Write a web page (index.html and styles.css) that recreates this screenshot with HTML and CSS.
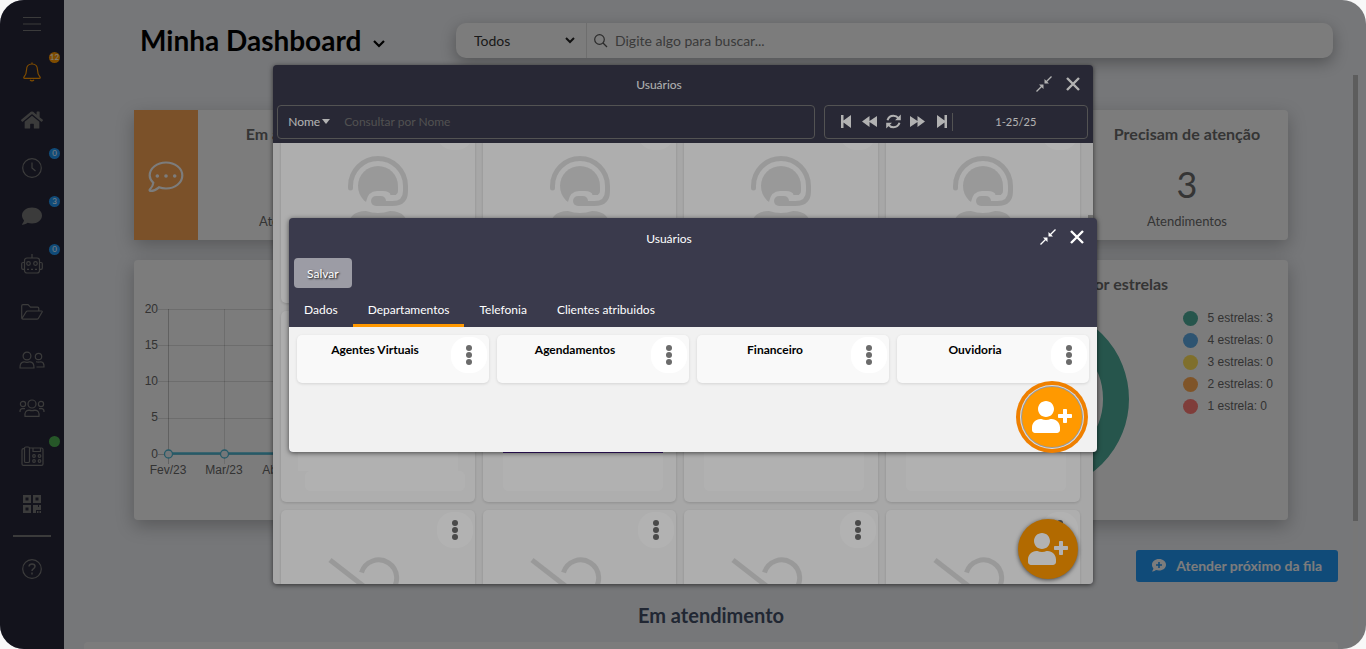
FILE: index.html
```html
<!DOCTYPE html>
<html lang="pt-BR">
<head>
<meta charset="utf-8">
<title>Minha Dashboard</title>
<link rel="stylesheet" href="styles.css">
</head>
<body>
<svg class="defs" width="0" height="0" aria-hidden="true">
  <symbol id="i-dots" viewBox="0 0 8 22"><circle cx="4" cy="4" r="3"/><circle cx="4" cy="11" r="3"/><circle cx="4" cy="18" r="3"/></symbol>
  <symbol id="i-close" viewBox="0 0 16 16"><path d="M2 2l12 12M14 2L2 14" fill="none" stroke="currentColor" stroke-width="2.4"/></symbol>
  <symbol id="i-shrink" viewBox="0 0 16 16"><path d="M.5 15.500L6 10M15.500.5L10 6" fill="none" stroke="currentColor" stroke-width="1.4"/><path d="M3 8.500h4.500V13zM8.500 3v4.500H13z"/></symbol>
  <symbol id="i-useradd" viewBox="0 0 640 512"><path d="M624 208h-64v-64c0-8.800-7.200-16-16-16h-32c-8.800 0-16 7.200-16 16v64h-64c-8.800 0-16 7.200-16 16v32c0 8.800 7.200 16 16 16h64v64c0 8.800 7.200 16 16 16h32c8.800 0 16-7.200 16-16v-64h64c8.800 0 16-7.200 16-16v-32c0-8.800-7.200-16-16-16zm-400 48c70.700 0 128-57.300 128-128S294.700 0 224 0 96 57.300 96 128s57.300 128 128 128zm89.600 32h-16.700c-22.200 10.200-46.900 16-72.900 16s-50.600-5.800-72.900-16h-16.700C60.200 288 0 348.200 0 422.400V464c0 26.500 21.500 48 48 48h352c26.500 0 48-21.500 48-48v-41.600c0-74.200-60.200-134.400-134.400-134.400z"/></symbol>
  <symbol id="i-agent" viewBox="0 0 60 80">
    <circle cx="30" cy="30" r="20"/>
    <path d="M18 50V46q2-11 11-11h6q6 0 8 4h8v11z" fill="#f9f9f9"/>
    <path d="M50 30v5q0 4-5 4h-3z"/>
    <path d="M2.500 32V30a27.500 27.500 0 0 1 55 0v5q0 12.500-13 12.500H30" fill="none" stroke="currentColor" stroke-width="5" stroke-linecap="round"/>
    <rect x="23" y="40" width="15" height="10" rx="5"/>
    <path d="M0 80v-7q0-18 18-18 12 4 24 0 18 0 18 18v7z"/>
  </symbol>
  <symbol id="i-noagent" viewBox="0 0 100 80"><g fill="none" stroke="currentColor" stroke-width="5"><path d="M2 6l76 59" stroke-linecap="butt"/><path d="M33.500 18.500a18 18 0 1 1 29 19"/></g></symbol>
</svg>

<div class="app">
  <nav class="side" aria-label="Menu">
    <a class="item" href="#" aria-label="Abrir menu"><svg width="18" height="16" viewBox="0 0 18 16"><path d="M0 1.500h18M0 8h18M0 14.500h18"/></svg></a>
    <a class="item alert" href="#" aria-label="Notificações"><svg width="18" height="20" viewBox="0 0 18 20"><path d="M9 .5v1.500M9 2C5.500 2 3.500 4.500 3.500 8c0 4-1.200 5.500-2.500 7-.5.7-.2 1.300.6 1.300h14.800c.8 0 1.100-.6.6-1.300-1.300-1.500-2.500-3-2.500-7C14.500 4.500 12.500 2 9 2zM7 18q2 1.800 4 0"/></svg><span class="badge orange">12</span></a>
    <a class="item" href="#" aria-label="Início"><svg class="solid" width="22" height="20" viewBox="0 0 576 512"><path d="M280.370 148.260L96 300.110V464a16 16 0 0 0 16 16l112.060-.29a16 16 0 0 0 15.920-16V368a16 16 0 0 1 16-16h64a16 16 0 0 1 16 16v95.640a16 16 0 0 0 16 16.050L464 480a16 16 0 0 0 16-16V300L295.670 148.260a12.190 12.190 0 0 0-15.300 0zM571.600 251.470L488 182.560V44.050a12 12 0 0 0-12-12h-56a12 12 0 0 0-12 12v72.610L318.470 43a48 48 0 0 0-61 0L4.340 251.470a12 12 0 0 0-1.600 16.900l25.500 31A12 12 0 0 0 45.150 301l235.220-193.740a12.190 12.190 0 0 1 15.300 0L530.900 301a12 12 0 0 0 16.900-1.600l25.500-31a12 12 0 0 0-1.700-16.930z"/></svg></a>
    <a class="item" href="#" aria-label="Em espera"><svg width="20" height="20" viewBox="0 0 20 20"><circle cx="10" cy="10" r="9.300"/><path d="M10 4.500V10l3.500 3"/></svg><span class="badge">0</span></a>
    <a class="item" href="#" aria-label="Conversas"><svg class="solid" width="20" height="18" viewBox="0 0 20 18"><path d="M10 .5c5.500 0 10 3.500 10 8s-4.500 8-10 8c-1.600 0-3-.3-4.400-.8C4.300 16.700 2.300 17.800.3 17.700c-.3 0-.4-.4-.2-.7C1 16 1.900 14.600 2 13.200.8 11.900 0 10.300 0 8.500c0-4.500 4.500-8 10-8z"/></svg><span class="badge">3</span></a>
    <a class="item" href="#" aria-label="Robôs"><svg width="22" height="20" viewBox="0 0 22 20"><path d="M11 0v4"/><rect x="3.500" y="4" width="15" height="15" rx="2.500"/><path d="M3.500 8.500H2q-1.300 0-1.300 1.300V14q0 1.300 1.300 1.300h1.500M18.500 8.500H20q1.300 0 1.300 1.300V14q0 1.300-1.300 1.300h-1.500"/><circle cx="7.500" cy="9.500" r="1.800"/><circle cx="14.500" cy="9.500" r="1.800"/><path d="M6 15.300h2M10 15.300h2M14 15.300h2"/></svg><span class="badge">0</span></a>
    <a class="item" href="#" aria-label="Arquivos"><svg width="22" height="16" viewBox="0 0 22 16"><path d="M.7 14V2Q.7.7 2 .7h5l2.500 2.500h7q1.300 0 1.300 1.300V7M1 14.500L5 8q.6-1 1.700-1h13.800q1 0 .6 1l-3.500 6q-.6 1.200-1.800 1.200H2Q.7 15.200.7 14"/></svg></a>
    <a class="item" href="#" aria-label="Contatos"><svg width="26" height="18" viewBox="0 0 26 18"><circle cx="8" cy="5" r="3.900"/><path d="M1 17q-.2-6 4-6.200 3 1 6 0 4.200.2 4 6.200z"/><circle cx="19.500" cy="5.500" r="3.200"/><path d="M17 10.800q2.500.8 5 0 3.200.2 3 5.200h-7.500"/></svg></a>
    <a class="item" href="#" aria-label="Equipes"><svg width="26" height="18" viewBox="0 0 26 18"><circle cx="13" cy="5" r="4"/><path d="M6 17.300q-.6-6 4-6.200 3 1 6 0 4.600.2 4 6.200z"/><circle cx="4" cy="5" r="2.600"/><circle cx="22" cy="5" r="2.600"/><path d="M1 13q-.2-3 2-3.300h3M25 13q.2-3-2-3.300h-3"/></svg></a>
    <a class="item" href="#" aria-label="Telefonia"><svg width="23" height="20" viewBox="0 0 23 20"><path d="M8.500 2H20.500q1.500 0 1.500 1.500V18q0 1.300-1.500 1.300H2.500Q1 19.300 1 18V4q0-1.300 1.500-1.300h1"/><rect x="3.500" y="1" width="5" height="15.500" rx="1.300"/><path d="M12 2v3.500h7.500V2"/><g><circle cx="13" cy="10" r="1.300"/><circle cx="18.500" cy="10" r="1.300"/><circle cx="13" cy="15" r="1.300"/><circle cx="18.500" cy="15" r="1.300"/></g></svg><span class="badge green"></span></a>
    <a class="item" href="#" aria-label="QR Code"><svg class="solid" width="18" height="18" viewBox="0 0 18 18"><path fill-rule="evenodd" d="M0 0h8v8H0zM2.500 2.500v3h3v-3zM10 0h8v8h-8zM12.500 2.500v3h3v-3zM0 10h8v8H0zM2.500 12.500v3h3v-3zM10 10h5v2h1v-2h2v5h-5v3h-3zM14 16h1.500v2H14zM16.500 16H18v2h-1.500z"/></svg></a>
    <hr class="rule">
    <a class="item" href="#" aria-label="Ajuda"><svg width="20" height="20" viewBox="0 0 20 20"><circle cx="10" cy="10" r="9.300"/><path d="M7 7.500q.3-2.500 3-2.500 3 0 3 2.300 0 1.600-1.700 2.500Q10 10.500 10 12M10 13.500v2" stroke-width="1.500"/></svg></a>
  </nav>

  <main class="main">
    <header class="top">
      <h1 class="title">Minha Dashboard <svg width="12" height="8" viewBox="0 0 12 8"><path d="M1 1l5 5 5-5" fill="none" stroke="#000" stroke-width="2.200"/></svg></h1>
      <form class="search">
        <label class="scope"><select aria-label="Filtro"><option>Todos</option></select><svg width="10" height="7" viewBox="0 0 10 7"><path d="M1 1l4 4 4-4" fill="none" stroke="#222" stroke-width="2"/></svg></label>
        <svg width="14" height="14" viewBox="0 0 14 14"><g fill="none" stroke="#555" stroke-width="1.200"><circle cx="5.500" cy="5.500" r="4.800"/><path d="M9 9l4 4"/></g></svg>
        <input type="text" aria-label="Buscar" placeholder="Digite algo para buscar...">
      </form>
    </header>

    <div class="content">
      <section class="stats">
        <article class="card stat">
          <div class="swatch"><svg width="36" height="32" viewBox="0 0 36 32"><path d="M18 1.500c9 0 16.300 5.700 16.300 13S27 27.500 18 27.500c-2.500 0-5-.4-7-1.200-2.500 2.200-5.300 3.700-8.500 3.700-1 0-1.200-.8-.6-1.500 1.800-2 3.300-4 3.400-6.700C3 19.500 1.700 17 1.700 14.500c0-7.300 7.300-13 16.300-13z" fill="none" stroke="#f9f9f9" stroke-width="2.200"/><g fill="#f9f9f9"><circle cx="9.300" cy="15" r="1.800"/><circle cx="18" cy="15" r="1.800"/><circle cx="26.700" cy="15" r="1.800"/></g></svg></div>
          <div class="info"><h3>Em andamento</h3><p>Atendimentos</p></div>
        </article>
        <article class="card stat"></article>
        <article class="card stat"></article>
        <article class="card stat">
          <div class="swatch"></div>
          <div class="info"><h3>Precisam de atenção</h3><strong>3</strong><p>Atendimentos</p></div>
        </article>
      </section>
      <section class="charts">
        <article class="card chart">
          <svg width="300" height="220" viewBox="0 0 300 220">
            <g stroke="#000" stroke-opacity=".12"><path d="M24 9.500h276M24 45.500h276M24 81.500h276M24 118.500h276M90.500 9v155M146.500 9v155" /></g>
            <path d="M34.500 9v155M24 154.500h276" stroke="#000" stroke-opacity=".22"/>
            <path d="M34 153.500h266" stroke="#4bb4d0" stroke-width="2.500"/>
            <g fill="#e8eff2" stroke="#4bb4d0" stroke-width="1.300"><circle cx="34.500" cy="154" r="4"/><circle cx="90.500" cy="154" r="4"/><circle cx="146.500" cy="154" r="4"/></g>
            <g class="axis" text-anchor="end"><text x="24" y="13">20</text><text x="24" y="49">15</text><text x="24" y="85">10</text><text x="24" y="121">5</text><text x="24" y="158">0</text></g>
            <g class="axis" text-anchor="middle"><text x="34" y="174">Fev/23</text><text x="90" y="174">Mar/23</text><text x="146" y="174">Abr/23</text></g>
          </svg>
        </article>
        <article class="card rating">
          <h3>Notas por estrelas</h3>
          <div class="ratingrow">
            <svg width="184" height="184" viewBox="0 0 184 184"><circle cx="92" cy="92" r="79" fill="none" stroke="#4caa98" stroke-width="26"/></svg>
            <ul class="legend">
              <li><i class="dot teal"></i>5 estrelas: 3</li>
              <li><i class="dot blue"></i>4 estrelas: 0</li>
              <li><i class="dot yellow"></i>3 estrelas: 0</li>
              <li><i class="dot amber"></i>2 estrelas: 0</li>
              <li><i class="dot red"></i>1 estrela: 0</li>
            </ul>
          </div>
        </article>
      </section>
      <div class="actions"><button class="next" type="button"><svg width="14" height="13" viewBox="0 0 14 13"><path d="M7 0c4 0 7 2.500 7 5.800s-3 5.800-7 5.800c-1 0-2-.2-3-.5C3 12 1.700 12.600.3 12.500c-.3 0-.3-.3-.1-.5.6-.7 1.100-1.600 1.200-2.600C.5 8.400 0 7.200 0 5.800 0 2.500 3 0 7 0z" fill="#f9f9f9"/><path d="M7 3v6M4 6h6" stroke="#2196f3" stroke-width="1.600"/></svg>Atender próximo da fila</button></div>
      <h2 class="heading">Em atendimento</h2>
      <section class="card list"></section>
    </div>
    <div class="track"><div class="thumb"></div></div>
  </main>

  <div class="backdrop"></div>

  <section class="window users" role="dialog" aria-label="Usuários">
    <header class="bar">
      <h2>Usuários</h2>
      <button type="button" aria-label="Reduzir"><svg width="16" height="16"><use href="#i-shrink"/></svg></button>
      <button type="button" aria-label="Fechar"><svg width="16" height="16"><use href="#i-close"/></svg></button>
    </header>
    <div class="tools">
      <div class="field query">
        <label class="by"><select aria-label="Campo"><option>Nome</option></select><svg width="8" height="5" viewBox="0 0 8 5"><path d="M0 0h8L4 5z"/></svg></label>
        <input type="text" aria-label="Consultar por Nome" placeholder="Consultar por Nome">
      </div>
      <div class="field pager">
        <button type="button" aria-label="Primeira"><svg width="10" height="13" viewBox="0 0 10 13"><path d="M0 0h2.500v5.500L10 0v13L2.500 7.500V13H0z"/></svg></button>
        <button type="button" aria-label="Anterior"><svg width="15" height="11" viewBox="0 0 15 11"><path d="M7.500 0v5L15 0v11L7.500 6v5L0 5.500z"/></svg></button>
        <button type="button" aria-label="Atualizar"><svg width="15" height="15" viewBox="0 0 15 15"><g fill="none" stroke="currentColor" stroke-width="2"><path d="M1.500 6.200Q2.800 1.800 7.500 1.700q3 0 5 2.500M13.500 8.800q-1.300 4.400-6 4.500-3 0-5-2.500"/></g><path d="M14.800.5v5.800H9zM.2 14.500V8.700H6z"/></svg></button>
        <button type="button" aria-label="Próxima"><svg width="15" height="11" viewBox="0 0 15 11"><path d="M7.500 0v5L0 0v11l7.500-5v5L15 5.500z"/></svg></button>
        <button type="button" aria-label="Última"><svg width="10" height="13" viewBox="0 0 10 13"><path d="M10 0H7.500v5.500L0 0v13l7.500-5.500V13H10z"/></svg></button>
        <span class="count">1-25/25</span>
      </div>
    </div>
    <div class="people">
      <div class="grid">
        <article class="person"><svg width="60" height="80"><use href="#i-agent"/></svg><button class="more" type="button" aria-label="Opções"><svg width="8" height="22"><use href="#i-dots"/></svg></button></article>
        <article class="person"><svg width="60" height="80"><use href="#i-agent"/></svg><button class="more" type="button" aria-label="Opções"><svg width="8" height="22"><use href="#i-dots"/></svg></button></article>
        <article class="person"><svg width="60" height="80"><use href="#i-agent"/></svg><button class="more" type="button" aria-label="Opções"><svg width="8" height="22"><use href="#i-dots"/></svg></button></article>
        <article class="person"><svg width="60" height="80"><use href="#i-agent"/></svg><button class="more" type="button" aria-label="Opções"><svg width="8" height="22"><use href="#i-dots"/></svg></button></article>
        <article class="person low"><div class="plate wide"></div><div class="plate short"></div></article>
        <article class="person low"><div class="plate lined"></div></article>
        <article class="person low"><div class="plate"></div></article>
        <article class="person low"><div class="plate"></div></article>
        <article class="person"><svg width="100" height="80"><use href="#i-noagent"/></svg><button class="more" type="button" aria-label="Opções"><svg width="8" height="22"><use href="#i-dots"/></svg></button></article>
        <article class="person"><svg width="100" height="80"><use href="#i-noagent"/></svg><button class="more" type="button" aria-label="Opções"><svg width="8" height="22"><use href="#i-dots"/></svg></button></article>
        <article class="person"><svg width="100" height="80"><use href="#i-noagent"/></svg><button class="more" type="button" aria-label="Opções"><svg width="8" height="22"><use href="#i-dots"/></svg></button></article>
        <article class="person"><svg width="100" height="80"><use href="#i-noagent"/></svg><button class="more" type="button" aria-label="Opções"><svg width="8" height="22"><use href="#i-dots"/></svg></button></article>
      </div>
      <div class="scroll"></div>
    </div>
    <button class="fab" type="button" aria-label="Adicionar usuário"><svg width="40" height="32"><use href="#i-useradd"/></svg></button>
    <div class="shade"></div>
  </section>

  <section class="window user" role="dialog" aria-label="Usuário">
    <header class="bar">
      <h2>Usuários</h2>
      <button type="button" aria-label="Reduzir"><svg width="16" height="16"><use href="#i-shrink"/></svg></button>
      <button type="button" aria-label="Fechar"><svg width="16" height="16"><use href="#i-close"/></svg></button>
    </header>
    <div class="save"><button type="button">Salvar</button></div>
    <nav class="tabs">
      <a href="#">Dados</a><a class="on" href="#">Departamentos</a><a href="#">Telefonia</a><a href="#">Clientes atribuidos</a>
    </nav>
    <div class="depts">
      <article class="dept"><h3>Agentes Virtuais</h3><button class="more" type="button" aria-label="Opções"><svg width="8" height="22"><use href="#i-dots"/></svg></button></article>
      <article class="dept"><h3>Agendamentos</h3><button class="more" type="button" aria-label="Opções"><svg width="8" height="22"><use href="#i-dots"/></svg></button></article>
      <article class="dept"><h3>Financeiro</h3><button class="more" type="button" aria-label="Opções"><svg width="8" height="22"><use href="#i-dots"/></svg></button></article>
      <article class="dept"><h3>Ouvidoria</h3><button class="more" type="button" aria-label="Opções"><svg width="8" height="22"><use href="#i-dots"/></svg></button></article>
    </div>
    <button class="fab focus" type="button" aria-label="Adicionar departamento"><svg width="40" height="32"><use href="#i-useradd"/></svg></button>
  </section>
</div>
</body>
</html>
```

FILE: styles.css
```css
* { box-sizing: border-box; }
body { margin: 0; background: #f8f8f8; font-family: Lato, "Liberation Sans", sans-serif; font-size: 13px; }
h1, h2, h3, p, ul { margin: 0; padding: 0; }
button, input, select { font: inherit; color: inherit; background: none; border: 0; padding: 0; margin: 0; }
select { appearance: none; }
svg { display: block; fill: currentColor; flex: none; }
a { color: inherit; text-decoration: none; }
.defs { position: absolute; }

.app { position: relative; display: flex; height: 100vh; border-radius: 24px; overflow: hidden; background: #eceef2; }

.side { width: 64px; flex: none; background: #262638; color: #777; display: flex; flex-direction: column; }
.item { position: relative; height: 48px; flex: none; display: flex; align-items: center; justify-content: center; }
.item svg { fill: none; stroke: currentColor; stroke-width: 1.2; }
.item svg.solid { fill: currentColor; stroke: none; }
.item.alert { color: #ff9800; }
.badge { position: absolute; top: 4px; right: 4px; width: 11px; height: 11px; border-radius: 50%; background: #2196f3; color: #fff; font-size: 8px; line-height: 11px; text-align: center; }
.badge.orange { background: #ff9800; }
.badge.green { background: #4caf50; }
.rule { width: 38px; height: 2px; margin: 7px auto 8px; border: 0; flex: none; background: #777; }

.main { flex: 1; min-width: 0; position: relative; overflow: hidden; }
.top { display: flex; padding: 23px 33px 0 76px; }
.title { flex: 0 0 316px; display: flex; align-items: center; gap: 12px; font-size: 28px; line-height: 35px; color: #000; }
.title svg { margin-top: 6px; }
.search { flex: 1; height: 35px; display: flex; align-items: center; background: #f9f9f9; border-radius: 10px; box-shadow: 0 5px 15px rgba(0,0,0,.3); font-size: 14px; color: #333; }
.scope { width: 131px; height: 35px; margin-right: 7px; padding: 0 11px 0 18px; border-right: 1px solid #ddd; display: flex; align-items: center; }
.scope select { flex: 1; }
.search input { flex: 1; margin-left: 7px; outline: 0; }
.search input::placeholder { color: #757575; opacity: 1; }

.content { padding: 52px 28px 0 20px; }
.card { background: #f9f9f9; border-radius: 4px; box-shadow: 0 6px 18px rgba(0,0,0,.25); }
.stats { margin: 0 50px; display: grid; grid-template-columns: repeat(4, 1fr); gap: 30px; }
.stat { height: 130px; display: flex; }
.swatch { width: 64px; padding-top: 3px; background: #f6a252; display: flex; align-items: center; justify-content: center; }
.info { flex: 1; display: flex; flex-direction: column; align-items: center; padding: 14px 0 9px; color: #6a6a6a; }
.info h3, .rating h3 { font-size: 16px; line-height: 20px; color: #6a6a6a; white-space: nowrap; }
.info strong { font-weight: 400; font-size: 36px; line-height: 44px; margin-top: 18px; }
.info p { margin-top: auto; font-size: 13px; line-height: 20px; }
.charts { margin: 20px 50px 0; display: grid; grid-template-columns: 2fr 1fr; gap: 30px; }
.chart { height: 260px; padding-top: 40px; overflow: hidden; }
.axis { font: 12px "Liberation Sans", sans-serif; fill: #666; }
.rating { padding-top: 14px; text-align: center; }
.rating h3 { padding-left: 6px; }
.ratingrow { display: flex; padding: 13px 15px 0 32px; justify-content: space-between; align-items: flex-start; }
.legend { list-style: none; text-align: left; font: 12px/22px "Liberation Sans", sans-serif; color: #666; }
.legend li { display: flex; align-items: center; gap: 10px; }
.dot { width: 15px; height: 15px; border-radius: 50%; }
.teal { background: #4caa98; } .blue { background: #5ca8e2; } .yellow { background: #fedf58; } .amber { background: #ffa951; } .red { background: #ff7a74; }
.actions { display: flex; justify-content: flex-end; margin-top: 30px; }
.next { height: 32px; padding: 0 16px 1px; display: flex; align-items: center; gap: 10px; border-radius: 3px; background: #2196f3; color: #f9f9f9; font-size: 14px; font-weight: 700; }
.heading { margin-top: 21px; text-align: center; font-size: 20px; line-height: 24px; color: #424f66; }
.list { height: 40px; margin-top: 15px; box-shadow: none; }
.track { position: absolute; right: 8px; top: 75px; bottom: 0; width: 5px; background: #eee; }
.thumb { height: 446px; background: #bbb; }

.backdrop { position: absolute; inset: 0; background: rgba(0,0,0,.5); }

.window { position: absolute; display: flex; flex-direction: column; background: #3a3a4c; color: #fff; border-radius: 4px; box-shadow: 0 1px 5px rgba(0,0,0,.6); }
.users { left: 20%; top: 10%; width: 60%; height: 80%; overflow: hidden; }
.user { left: 289px; top: 218px; width: 808px; }
.bar { height: 40px; flex: none; display: flex; align-items: center; padding-right: 12px; gap: 13px; }
.bar h2 { flex: 1; text-align: center; font-size: 12px; font-weight: 400; padding-left: 22px; }
.bar svg { margin-bottom: 2px; }
.tools { display: flex; gap: 9px; padding: 0 5px 4px 4px; }
.field { height: 34px; display: flex; align-items: center; border: 1px solid #777; border-radius: 4px; font-size: 12px; }
.query { flex: 1; }
.query input { flex: 1; margin-left: 14px; outline: 0; }
.query input::placeholder { color: #757575; opacity: 1; }
.by { display: flex; align-items: center; gap: 2px; padding-left: 10px; }
.pager { width: 264px; padding-left: 9px; }
.pager button { width: 24px; height: 20px; display: grid; place-items: center; }
.count { flex: 1; padding-right: 8px; text-align: center; border-left: 1px solid #777; font-size: 11px; line-height: 18px; }
.pager .count { margin-left: -2px; }
.people { flex: 1; min-height: 0; position: relative; overflow: hidden; background: #f0f0f0; }
.grid { margin: -31px 13px 0 8px; display: grid; grid-template-columns: repeat(4, 1fr); gap: 8px; }
.person { position: relative; height: 191px; padding-top: 44px; display: flex; flex-direction: column; align-items: center; background: #f9f9f9; border-radius: 5px; box-shadow: 0 1px 3px rgba(0,0,0,.15); color: #dcdcdc; }
.low { justify-content: flex-end; padding-bottom: 11px; }
.plate { width: 160px; height: 60px; margin-left: 6px; background: #fefefe; border-radius: 5px; }
.plate.wide { height: 30px; margin-left: 0; border-radius: 0; }
.plate.short { height: 20px; margin-left: 14px; }
.plate.lined { height: 41px; border-top: 3px solid #50209c; border-radius: 0 0 5px 5px; }
.more { position: absolute; top: 2px; right: 2px; width: 36px; height: 36px; border-radius: 16px; background: #fff; color: #6b6b6b; display: grid; place-items: center; }
.scroll { position: absolute; right: 0; top: 72px; width: 5px; height: 180px; background: #aaa; }
.fab { position: absolute; right: 15px; bottom: 5px; width: 60px; height: 60px; border-radius: 50%; background: #ff9900; color: #fff; display: grid; place-items: center; box-shadow: 0 1px 4px rgba(0,0,0,.6); }
.fab.focus { box-shadow: 0 0 0 1px #999, 0 0 0 2px #ddd, 0 0 0 6px #ef8000; }
.shade { position: absolute; inset: 0; background: rgba(0,0,0,.3); }

.save { padding-left: 5px; }
.save button { height: 30px; padding: 0 13px; border-radius: 4px; background: #9c9ca5; font-size: 12px; text-shadow: 1px 1px 2px #000; display: block; }
.tabs { display: flex; padding-top: 5px; }
.tabs a { height: 34px; line-height: 34px; padding: 0 15px; font-size: 12px; border-bottom: 3px solid transparent; }
.tabs .on { border-color: #ff9800; }
.depts { display: grid; grid-template-columns: repeat(4, 1fr); gap: 8px; padding: 8px 8px 69px; background: #f1f1f1; border-radius: 0 0 4px 4px; }
.dept { position: relative; height: 48px; padding: 7px 36px 0 0; background: #f9f9f9; border-radius: 5px; box-shadow: 0 1px 3px rgba(0,0,0,.12); }
.dept h3 { text-align: center; font-size: 12px; line-height: 16px; color: #000; }
```
